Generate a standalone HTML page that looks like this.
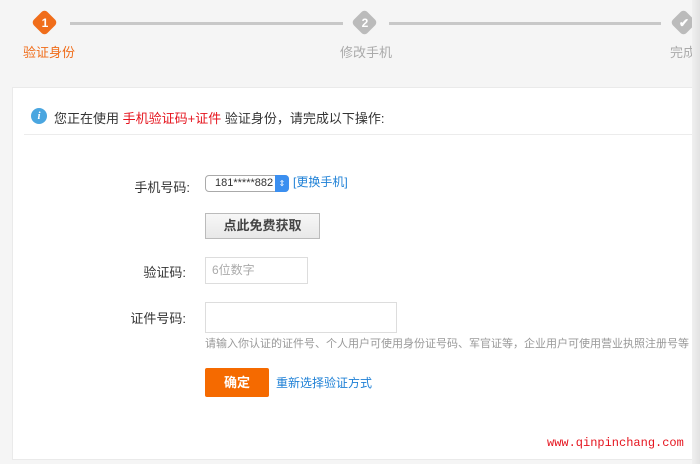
<!DOCTYPE html>
<html><head><meta charset="utf-8"><style>
*{margin:0;padding:0;box-sizing:border-box}
body{width:700px;height:464px;background:#f5f5f5;font-family:"Liberation Sans","Noto Sans CJK SC",sans-serif;position:relative;overflow:hidden;font-size:12px;color:#333}
.a{position:absolute}
.dia{position:absolute;width:19px;height:19px;transform:rotate(45deg);border-radius:4px}
.num{position:absolute;width:24px;text-align:center;color:#fff;font-weight:bold;font-size:12px;line-height:24px}
.line{position:absolute;height:3px;background:#c8c8c8;top:22px}
.panel{position:absolute;left:12px;top:87px;width:681px;height:373px;background:#fff;border:1px solid #eaeaea}
.lbl{position:absolute;width:80px;text-align:right;font-size:13px;color:#333}
.hint{font-size:11px;color:#999}
</style></head><body>
<div class="dia" style="left:35px;top:13px;background:#f06d1a"></div><div class="num" style="left:33px;top:11px">1</div>
<div class="line" style="left:70px;width:273px"></div>
<div class="dia" style="left:355px;top:13px;background:#bbb"></div><div class="num" style="left:353px;top:11px">2</div>
<div class="line" style="left:389px;width:272px"></div>
<div class="dia" style="left:674px;top:13px;background:#bbb"></div><div class="num" style="left:672px;top:11px">✔</div>
<div class="a" style="left:23px;top:42px;color:#f06d1a;font-size:13px">验证身份</div>
<div class="a" style="left:340px;top:42px;color:#aaa;font-size:13px">修改手机</div>
<div class="a" style="left:670px;top:42px;color:#aaa;font-size:13px">完成</div>
<div class="panel"></div>
<div class="a" style="left:31px;top:108px;width:16px;height:16px;border-radius:50%;background:#4aa6e0;color:#fff;font-size:11px;font-weight:bold;text-align:center;line-height:16px;font-style:italic;font-family:'Liberation Serif',serif">i</div>
<div class="a" style="left:54px;top:108px;font-size:13px">您正在使用 <span style="color:#e5141e">手机验证码+证件</span> 验证身份，请完成以下操作:</div>
<div class="a" style="left:24px;top:134px;width:676px;height:1px;background:#ececec"></div>
<div class="lbl" style="left:110px;top:177px">手机号码:</div>
<div class="a" style="left:205px;top:175px;width:84px;height:17px;border:1px solid #aaa;border-radius:4px;background:#fff;font-size:11px;line-height:15px;padding-left:9px">181*****882</div>
<div class="a" style="left:275px;top:175px;width:14px;height:17px;background:#3b8ff0;border-radius:0 4px 4px 0;color:#fff;font-size:8px;text-align:center;line-height:17px">⇕</div>
<div class="a" style="left:293px;top:173px;color:#1e80d6;font-size:12px">[更换手机]</div>
<div class="a" style="left:205px;top:213px;width:115px;height:26px;border:1px solid #bbb;background:linear-gradient(#f7f7f7,#e8e8e8);text-align:center;line-height:24px;font-weight:bold;font-size:13px;color:#444">点此免费获取</div>
<div class="lbl" style="left:106px;top:262px">验证码:</div>
<div class="a" style="left:205px;top:257px;width:103px;height:27px;border:1px solid #ddd;color:#aaa;font-size:12px;line-height:25px;padding-left:6px">6位数字</div>
<div class="lbl" style="left:106px;top:308px">证件号码:</div>
<div class="a" style="left:205px;top:302px;width:192px;height:31px;border:1px solid #ddd"></div>
<div class="a hint" style="left:205px;top:335px">请输入你认证的证件号、个人用户可使用身份证号码、军官证等，企业用户可使用营业执照注册号等</div>
<div class="a" style="left:205px;top:368px;width:64px;height:29px;background:#f56a00;border-radius:2px;color:#fff;font-weight:bold;font-size:13px;text-align:center;line-height:29px">确定</div>
<div class="a" style="left:276px;top:374px;color:#1e80d6;font-size:12px">重新选择验证方式</div>
<div class="a" style="left:547px;top:436px;color:#e5141e;font-family:'Liberation Mono',monospace;font-size:12px">www.qinpinchang.com</div>
<div class="a" style="left:692px;top:0;width:8px;height:464px;background:linear-gradient(90deg,#f0f0f0,#e2e2e2)"></div>
</body></html>
